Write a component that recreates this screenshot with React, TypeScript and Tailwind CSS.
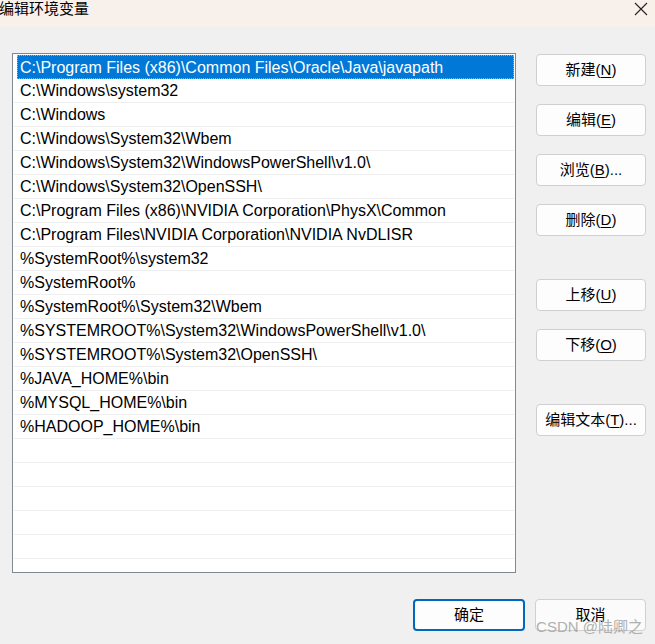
import React from "react";

const paths = [
  "C:\\Program Files (x86)\\Common Files\\Oracle\\Java\\javapath",
  "C:\\Windows\\system32",
  "C:\\Windows",
  "C:\\Windows\\System32\\Wbem",
  "C:\\Windows\\System32\\WindowsPowerShell\\v1.0\\",
  "C:\\Windows\\System32\\OpenSSH\\",
  "C:\\Program Files (x86)\\NVIDIA Corporation\\PhysX\\Common",
  "C:\\Program Files\\NVIDIA Corporation\\NVIDIA NvDLISR",
  "%SystemRoot%\\system32",
  "%SystemRoot%",
  "%SystemRoot%\\System32\\Wbem",
  "%SYSTEMROOT%\\System32\\WindowsPowerShell\\v1.0\\",
  "%SYSTEMROOT%\\System32\\OpenSSH\\",
  "%JAVA_HOME%\\bin",
  "%MYSQL_HOME%\\bin",
  "%HADOOP_HOME%\\bin",
];

const rows = [...paths, "", "", "", "", "", "", ""];

function Btn({ label, k, tail = "", className = "" }: { label: string; k?: string; tail?: string; className?: string }) {
  return (
    <button
      className={
        "h-[32px] w-[110px] rounded-[4px] border border-[#d0d0d0] bg-[#fdfdfd] text-[15px] text-black flex items-center justify-center " +
        className
      }
    >
      <span>
        {label}
        {k !== undefined && (
          <>
            (<span className="underline underline-offset-2">{k}</span>)
          </>
        )}
        {tail}
      </span>
    </button>
  );
}

export default function App() {
  return (
    <div
      className="relative w-[655px] h-[644px] bg-[#f0f0f0] flex flex-col overflow-hidden text-black"
      style={{ fontFamily: '"Liberation Sans", "Noto Sans CJK SC", sans-serif' }}
    >
      <div className="h-[27px] bg-[#f8f0eb] flex items-start justify-between">
        <div className="text-[15px] leading-[18px] mt-[0px] -ml-[1px]">编辑环境变量</div>
        <svg width="14" height="14" viewBox="0 0 14 14" className="mt-[2px] mr-[7px]">
          <path d="M1 1 L13 13 M13 1 L1 13" stroke="#222" strokeWidth="1.1" />
        </svg>
      </div>

      <div className="flex pt-[26px] pl-[12px] gap-[20px]">
        <div className="w-[504px] h-[520px] border border-[#828790] bg-white pt-[1px] px-[1px] overflow-hidden">
          {rows.map((r, i) => (
            <div key={i} className="h-[24px] relative">
              {i === 0 ? (
                <div className="absolute left-[3px] right-0 top-0 h-[24px] bg-[#0078d7] outline-1 outline-dotted outline-offset-[-1px] outline-[#e0a060] text-white text-[16px] leading-[23px] pt-[1px] pl-[3px] whitespace-nowrap">
                  {r}
                </div>
              ) : (
                <div className="h-[24px] border-b border-[#efefef] text-[16px] leading-[22px] pt-[1px] pl-[6px] whitespace-nowrap">
                  {r}
                </div>
              )}
            </div>
          ))}
        </div>

        <div className="w-[110px] flex flex-col pt-[1px]">
          <Btn label="新建" k="N" />
          <Btn label="编辑" k="E" className="mt-[18px]" />
          <Btn label="浏览" k="B" tail="..." className="mt-[18px]" />
          <Btn label="删除" k="D" className="mt-[18px]" />
          <Btn label="上移" k="U" className="mt-[43px]" />
          <Btn label="下移" k="O" className="mt-[18px]" />
          <Btn label="编辑文本" k="T" tail="..." className="mt-[43px]" />
        </div>
      </div>

      <div className="flex justify-end gap-[10px] pr-[9px] mt-[26px]">
        <button className="h-[32px] w-[112px] rounded-[4px] border-2 border-[#0067c0] bg-[#fdfdfd] text-[15px] flex items-center justify-center">
          确定
        </button>
        <button className="h-[32px] w-[111px] rounded-[4px] border border-[#d0d0d0] bg-[#fbfbfb] text-[15px] flex items-center justify-center">
          取消
        </button>
      </div>

      <div className="absolute right-[12px] bottom-[6px] text-[15px] text-[#a8a8a8] opacity-90 pointer-events-none">
        CSDN @陆卿之
      </div>
    </div>
  );
}
